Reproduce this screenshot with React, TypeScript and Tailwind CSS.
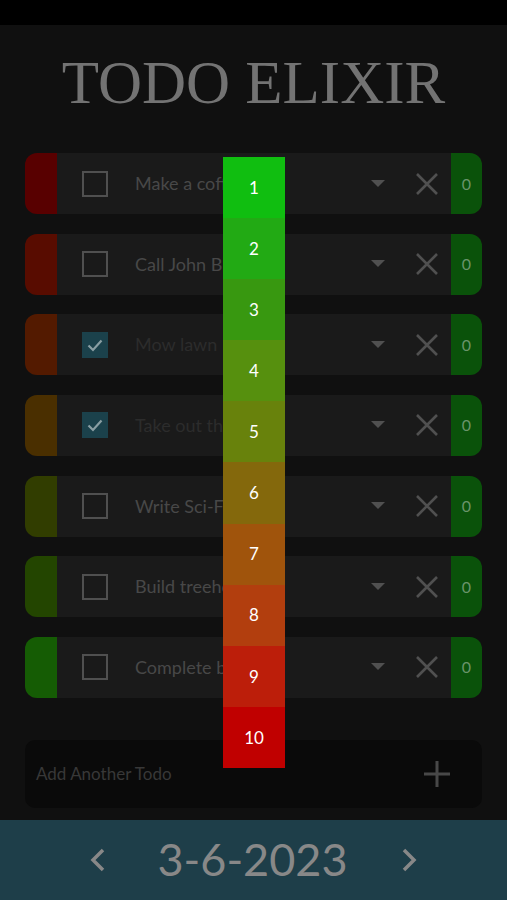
import React from "react";

const rows = [
  { text: "Make a coffee", color: "#580000", checked: false },
  { text: "Call John B", color: "#580c00", checked: false },
  { text: "Mow lawn", color: "#531a00", checked: true },
  { text: "Take out the trash", color: "#4a2f00", checked: true },
  { text: "Write Sci-Fi Novel", color: "#313d00", checked: false },
  { text: "Build treehouse", color: "#234500", checked: false },
  { text: "Complete baking", color: "#155c04", checked: false },
];

const picker = [
  "#10be10",
  "#22aa14",
  "#389810",
  "#56900e",
  "#68820c",
  "#84680c",
  "#a0540c",
  "#b23e0e",
  "#bc1e0a",
  "#c00000",
];

function Row({ text, color, checked }: { text: string; color: string; checked: boolean }) {
  return (
    <div className="flex h-[61px]">
      <div className="w-[32px] rounded-l-[12px]" style={{ backgroundColor: color }} />
      <div className="flex flex-1 items-center bg-[#1a1a1a]">
        <div className="ml-[25px] w-[26px] h-[26px] flex items-center justify-center">
          {checked ? (
            <div className="w-[26px] h-[26px] bg-[#1b414b] flex items-center justify-center">
              <svg width="20" height="20" viewBox="0 0 20 20">
                <path d="M3.5 10.5 L8 15 L16.5 5.5" fill="none" stroke="#8a9ea3" strokeWidth="2.2" />
              </svg>
            </div>
          ) : (
            <div className="w-[26px] h-[26px] border-[2px] border-[#505050]" />
          )}
        </div>
        <div
          className={`ml-[27px] text-[18px] flex-1 ${checked ? "text-[#2c2c2c]" : "text-[#484848]"}`}
          style={{ fontFamily: "Lato, sans-serif" }}
        >
          {text}
        </div>
        <svg width="14" height="8" viewBox="0 0 14 8" className="mr-[30px]">
          <path d="M0 0 L14 0 L7 7 Z" fill="#505050" />
        </svg>
        <svg width="24" height="24" viewBox="0 0 24 24" className="mr-[12px]">
          <path d="M2 2 L22 22 M22 2 L2 22" stroke="#505050" strokeWidth="2.6" />
        </svg>
      </div>
      <div
        className="w-[31px] rounded-r-[12px] bg-[#0a520a] flex items-center justify-center text-[16px] text-[#6a946a]"
        style={{ fontFamily: "Lato, sans-serif" }}
      >
        0
      </div>
    </div>
  );
}

export default function App() {
  return (
    <div className="relative w-[507px] h-[900px] bg-[#101010] flex flex-col overflow-hidden">
      <div className="h-[25px] bg-black shrink-0" />
      <div
        className="mt-[27px] h-[61px] leading-[61px] text-center text-[61px] text-[#737373]"
        style={{ fontFamily: '"Liberation Serif", serif' }}
      >
        TODO ELIXIR
      </div>
      <div className="mt-[40px] px-[25px] flex flex-col gap-[19.67px]">
        {rows.map((r) => (
          <Row key={r.text} {...r} />
        ))}
      </div>
      <div className="mt-[42px] mx-[25px] h-[68px] rounded-[10px] bg-[#0a0a0a] flex items-center">
        <div
          className="ml-[11px] flex-1 text-[17px] text-[#383838]"
          style={{ fontFamily: "Lato, sans-serif" }}
        >
          Add Another Todo
        </div>
        <svg width="28" height="28" viewBox="0 0 28 28" className="mr-[31px]">
          <path d="M14 1 L14 27 M1 14 L27 14" stroke="#484848" strokeWidth="3" />
        </svg>
      </div>
      <div className="mt-[12px] flex-1 bg-[#1e3e49] flex items-center justify-center">
        <svg width="18" height="26" viewBox="0 0 18 26" className="mr-[50px]">
          <path d="M14 3 L4 13 L14 23" fill="none" stroke="#888888" strokeWidth="3.5" />
        </svg>
        <div
          className="text-[45px] text-[#888888] leading-none"
          style={{ fontFamily: "Lato, sans-serif" }}
        >
          3-6-2023
        </div>
        <svg width="18" height="26" viewBox="0 0 18 26" className="ml-[52px]">
          <path d="M4 3 L14 13 L4 23" fill="none" stroke="#888888" strokeWidth="3.5" />
        </svg>
      </div>
      <div className="absolute left-[223px] top-[157px] w-[62px] flex flex-col">
        {picker.map((c, i) => (
          <div
            key={c}
            className="h-[61.1px] flex items-center justify-center text-[17px] text-white"
            style={{ backgroundColor: c, fontFamily: "Lato, sans-serif" }}
          >
            {i + 1}
          </div>
        ))}
      </div>
    </div>
  );
}
